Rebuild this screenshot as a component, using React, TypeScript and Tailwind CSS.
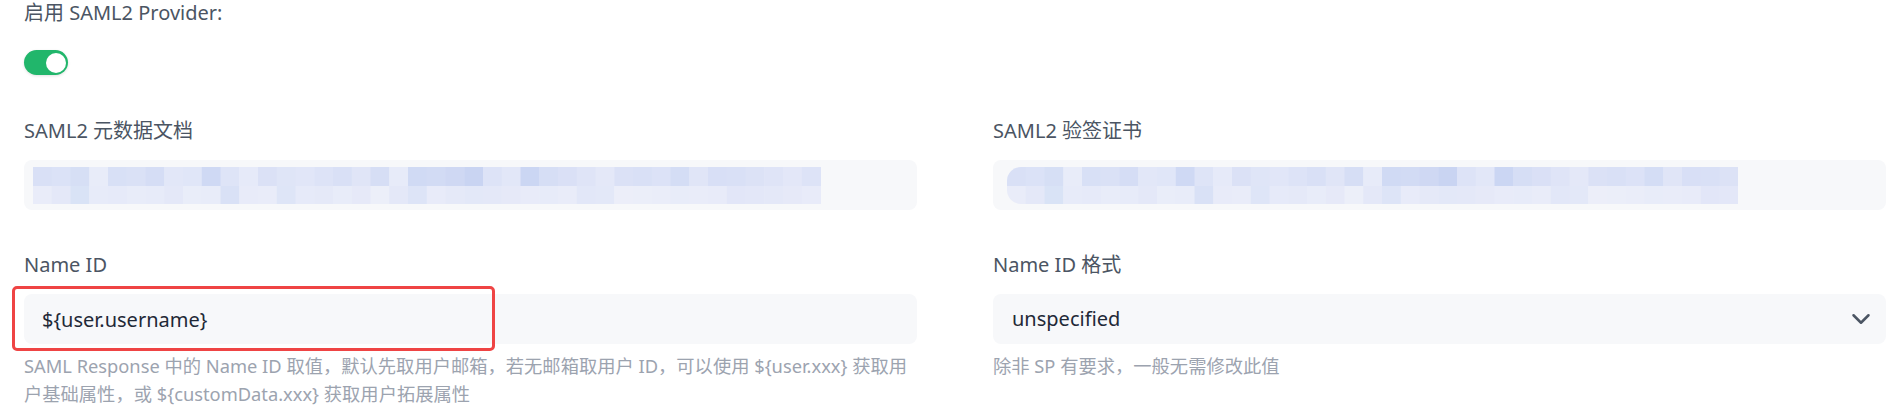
import React, { useState } from 'react';
import { ChevronDown } from 'lucide-react';

// redacted values are shown as a pixel mosaic, like the screenshot
const mosaicColors = [
  '#d9e0f6', '#dbe2f7', '#d6dff5', '#e8ecf9', '#d8e0f6', '#dae1f6', '#d5ddf5', '#e2e7f8',
  '#e0e6f8', '#cfd9f4', '#dee4f7', '#e6eaf9', '#dbe1f6', '#dfe5f7', '#e1e6f8', '#dde3f7',
  '#d9e0f6', '#e0e5f7', '#d6def5', '#e7ebf9', '#d0daf4', '#d2dbf4', '#cfd8f3', '#c9d4f2',
  '#dde3f7', '#e2e7f8', '#cbd6f3', '#d6def5', '#dae0f6', '#dfe4f7', '#e4e8f8', '#dbe1f6',
  '#d9e0f6', '#dce2f7', '#d4ddf5', '#e0e5f7', '#d8dff6', '#d9e0f6', '#dce2f6', '#dfe4f7',
  '#e3e7f8', '#dde3f7',
];
const mosaicColors2 = [
  '#e9ecf9', '#e4e8f8', '#d9e3f6', '#e7ebf9', '#e6eaf9', '#e8ecf9', '#e7ebf9', '#e4e8f8',
  '#e9edf9', '#e8ecf9', '#d9e1f6', '#e8ebf9', '#e9ecf9', '#dee5f7', '#e6eaf9', '#e5e9f8',
  '#e8ecf9', '#e6e9f8', '#eceff9', '#e4e8f8', '#dde4f7', '#e8ebf9', '#e5e9f8', '#e3e8f8',
  '#e4e8f8', '#e6e9f8', '#e8ebf9', '#e7ebf9', '#e9ecf9', '#e2e7f8', '#e3e8f8', '#eceef9',
  '#ebeef9', '#eaedf9', '#e8ecf9', '#e9ecf9', '#e8ebf9', '#e2e6f8', '#e3e7f8', '#e4e8f8',
  '#e6e9f8', '#e8ebf9',
];

const Mosaic: React.FC<{ cells: number }> = ({ cells }) => {
  const w = 18.75;
  return (
    <svg width={cells * w} height={37} className="block">
      {Array.from({ length: cells }).map((_, i) => (
        <React.Fragment key={i}>
          <rect x={i * w} y={0} width={w + 0.5} height={19} fill={mosaicColors[i % mosaicColors.length]} />
          <rect x={i * w} y={19} width={w + 0.5} height={18} fill={mosaicColors2[i % mosaicColors2.length]} />
        </React.Fragment>
      ))}
    </svg>
  );
};

const Label: React.FC<{ children: React.ReactNode }> = ({ children }) => (
  <div className="text-[20px] leading-[28px] text-[#4b5563] mb-[15px]">{children}</div>
);

const Help: React.FC<{ children: React.ReactNode }> = ({ children }) => (
  <p className="mt-[8px] text-[18.3px] leading-[28px] text-[#9ca3af]">{children}</p>
);

export default function App() {
  const [enabled, setEnabled] = useState(true);

  return (
    <div
      className="w-[1888px] h-[413px] bg-white pl-6 pr-[2px] overflow-hidden"
      style={{ fontFamily: '"Noto Sans", "Noto Sans CJK SC", sans-serif' }}
    >
      {/* Enable switch */}
      <div className="text-[20px] leading-[25px] text-[#4b5563]">启用 SAML2 Provider:</div>
      <button
        onClick={() => setEnabled(!enabled)}
        className={`mt-[25px] flex items-center w-[44px] h-[25px] rounded-full px-[2.5px] shadow-[0_1px_3px_rgba(0,0,0,0.12)] ${
          enabled ? 'bg-[#21b66b] justify-end' : 'bg-gray-300 justify-start'
        }`}
      >
        <span className="w-[20px] h-[20px] rounded-full bg-white" />
      </button>

      <div className="mt-[42px] grid grid-cols-2 gap-x-[76px]">
        {/* Metadata */}
        <div>
          <Label>SAML2 元数据文档</Label>
          <div className="h-[50px] rounded-[8px] bg-[#f7f8fa] flex items-center pl-[9px]">
            <Mosaic cells={42} />
          </div>
        </div>

        {/* Certificate */}
        <div>
          <Label>SAML2 验签证书</Label>
          <div className="h-[50px] rounded-[8px] bg-[#f7f8fa] flex items-center pl-[14px]">
            <div className="rounded-l-[14px] overflow-hidden">
              <Mosaic cells={39} />
            </div>
          </div>
        </div>

        {/* Name ID */}
        <div className="mt-[41px]">
          <Label>Name ID</Label>
          <div className="relative">
            <input
              defaultValue="${user.username}"
              className="w-full h-[50px] rounded-[8px] bg-[#f7f8fa] px-[18px] text-[20px] text-[#1f2937] outline-none"
            />
            <div className="absolute left-[-12px] top-[-8px] w-[483px] h-[65px] border-[3px] border-[#ef4444] rounded-[5px] pointer-events-none" />
          </div>
          <Help>
            SAML Response 中的 Name ID 取值，默认先取用户邮箱，若无邮箱取用户 ID，可以使用 {'${user.xxx}'} 获取用户基础属性，或 {'${customData.xxx}'} 获取用户拓展属性
          </Help>
        </div>

        {/* Name ID format */}
        <div className="mt-[41px]">
          <Label>Name ID 格式</Label>
          <div className="h-[50px] rounded-[8px] bg-[#f7f8fa] flex items-center justify-between pl-[19px] pr-[10px]">
            <span className="text-[20px] text-[#1f2937]">unspecified</span>
            <ChevronDown size={30} strokeWidth={2} className="text-[#4b5563]" />
          </div>
          <Help>除非 SP 有要求，一般无需修改此值</Help>
        </div>
      </div>
    </div>
  );
}
